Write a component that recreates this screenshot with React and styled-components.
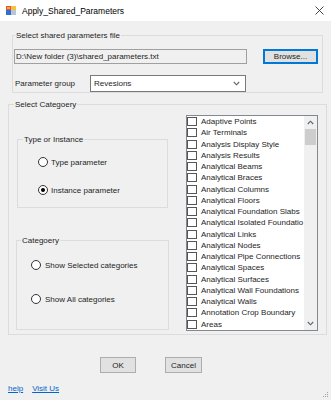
import styled, { createGlobalStyle } from "styled-components";

const GlobalStyle = createGlobalStyle`
  html, body {
    margin: 0;
    padding: 0;
    background: #f0f0f0;
  }
  body {
    font-family: "Liberation Sans", Arial, sans-serif;
    font-size: 8px;
    color: #1e1e1e;
  }
`;

const categories = [
  "Adaptive Points",
  "Air Terminals",
  "Analysis Display Style",
  "Analysis Results",
  "Analytical Beams",
  "Analytical Braces",
  "Analytical Columns",
  "Analytical Floors",
  "Analytical Foundation Slabs",
  "Analytical Isolated Foundatio",
  "Analytical Links",
  "Analytical Nodes",
  "Analytical Pipe Connections",
  "Analytical Spaces",
  "Analytical Surfaces",
  "Analytical Wall Foundations",
  "Analytical Walls",
  "Annotation Crop Boundary",
  "Areas",
];

const Window = styled.div`
  position: relative;
  width: 331px;
  height: 400px;
  display: flex;
  flex-direction: column;
  background: #f0f0f0;
  overflow: hidden;
`;

const TitleBar = styled.div`
  height: 21px;
  flex: none;
  background: #fff;
  display: flex;
  align-items: center;
  padding: 0 7px 0 6px;
  box-sizing: border-box;
`;

const TitleText = styled.span`
  margin-left: 6px;
  font-size: 8.5px;
  color: #000;
`;

const Close = styled.span`
  margin-left: auto;
  display: flex;
`;

const GroupBox = styled.fieldset`
  box-sizing: border-box;
  margin: ${(p) => p.$mt || 0}px 0 0 ${(p) => p.$ml || 0}px;
  padding: ${(p) => p.$pad || "0"};
  width: ${(p) => p.$w}px;
  ${(p) => (p.$h ? `height: ${p.$h}px;` : "")}
  border: 1px solid #dcdcdc;
  min-inline-size: 0;
`;

const Legend = styled.legend`
  padding: 0 1px;
  margin-left: ${(p) => p.$ml}px;
  line-height: 13px;
  font-size: 8px;
`;

const Row = styled.div`
  display: flex;
  align-items: center;
  margin-top: ${(p) => p.$mt || 0}px;
  margin-left: ${(p) => p.$ml || 0}px;
`;

const TextBox = styled.div`
  box-sizing: border-box;
  width: 233px;
  height: 15px;
  border: 1px solid #a0a0a0;
  background: #f0f0f0;
  padding-left: 1px;
  display: flex;
  align-items: center;
  white-space: nowrap;
`;

const Button = styled.div`
  box-sizing: border-box;
  width: ${(p) => p.$w}px;
  height: ${(p) => p.$h || 16}px;
  margin-left: ${(p) => p.$ml || 0}px;
  background: #e1e1e1;
  border: 1px solid ${(p) => (p.$focus ? "#0078d7" : "#adadad")};
  ${(p) => (p.$focus ? "box-shadow: inset 0 0 0 1px #0078d7;" : "")}
  display: flex;
  align-items: center;
  justify-content: center;
`;

const FieldLabel = styled.span`
  width: 75px;
`;

const Combo = styled.div`
  box-sizing: border-box;
  width: 156px;
  height: 17px;
  border: 1px solid #7a7a7a;
  background: #fff;
  display: flex;
  align-items: center;
  padding: 0 5px 0 3px;
  justify-content: space-between;
`;

const Columns = styled.div`
  display: flex;
  align-items: flex-start;
`;

const LeftColumn = styled.div`
  display: flex;
  flex-direction: column;
  align-items: flex-start;
  margin-left: 7px;
`;

const RadioList = styled.div`
  display: flex;
  flex-direction: column;
  gap: ${(p) => p.$gap}px;
  padding: ${(p) => p.$pt}px 0 0 ${(p) => p.$pl}px;
`;

const RadioRow = styled.div`
  display: flex;
  align-items: center;
  height: 12px;
  gap: ${(p) => p.$gap}px;
`;

const RadioCircle = styled.span`
  box-sizing: border-box;
  width: 10px;
  height: 10px;
  border-radius: 50%;
  border: 1px solid #333;
  background: #fff;
  display: flex;
  align-items: center;
  justify-content: center;
  &::after {
    content: "";
    width: 4px;
    height: 4px;
    border-radius: 50%;
    background: ${(p) => (p.$checked ? "#000" : "transparent")};
  }
`;

const ListBox = styled.div`
  box-sizing: border-box;
  width: 132px;
  height: 216px;
  margin: 4px 0 0 17px;
  border: 1px solid #828790;
  background: #fff;
  display: flex;
`;

const Items = styled.div`
  flex: 1;
  overflow: hidden;
`;

const Item = styled.div`
  height: 11.26px;
  display: flex;
  align-items: center;
  white-space: nowrap;
`;

const CheckBox = styled.span`
  box-sizing: border-box;
  flex: none;
  width: 10px;
  height: 9px;
  border: 1px solid #555;
  background: #fff;
  margin-right: 4px;
`;

const ScrollBar = styled.div`
  width: 13px;
  flex: none;
  background: #f0f0f0;
  display: flex;
  flex-direction: column;
`;

const ArrowButton = styled.div`
  height: 13px;
  display: flex;
  align-items: center;
  justify-content: center;
`;

const Thumb = styled.div`
  height: 16px;
  margin: 0 1px;
  background: #cdcdcd;
`;

const Spacer = styled.div`
  flex: 1;
`;

const ButtonRow = styled.div`
  display: flex;
  margin: 22px 0 0 100px;
`;

const Links = styled.div`
  display: flex;
  gap: 9px;
  margin: 11px 0 0 8px;
`;

const Link = styled.a`
  color: #0066cc;
  text-decoration: underline;
  font-size: 8px;
`;

const Grip = styled.svg`
  position: absolute;
  right: 2px;
  bottom: 2px;
`;

function Chevron({ up }) {
  return (
    <svg width="7" height="5" viewBox="0 0 7 5">
      <path
        d={up ? "M0.8 4 L3.5 1.2 L6.2 4" : "M0.8 1 L3.5 3.8 L6.2 1"}
        fill="none"
        stroke="#606060"
        strokeWidth="1.1"
      />
    </svg>
  );
}

function Radio({ label, checked, gap }) {
  return (
    <RadioRow $gap={gap}>
      <RadioCircle $checked={checked} />
      <span>{label}</span>
    </RadioRow>
  );
}

export default function App() {
  return (
    <>
      <GlobalStyle />
      <Window>
        <TitleBar>
          <svg width="10" height="9" viewBox="0 0 10 9">
            <rect x="0" y="0" width="5" height="4" fill="#e8552a" />
            <rect x="5" y="0" width="5" height="4" fill="#f5c343" />
            <rect x="0" y="4" width="5" height="5" fill="#2f6fd0" />
            <rect x="5" y="4" width="5" height="5" fill="#b9c4d6" />
            <rect x="1" y="1" width="3" height="2" fill="#f8a070" />
          </svg>
          <TitleText>Apply_Shared_Parameters</TitleText>
          <Close>
            <svg width="9" height="9" viewBox="0 0 9 9">
              <path d="M0.5 0.5 L8.5 8.5 M8.5 0.5 L0.5 8.5" stroke="#333" strokeWidth="0.9" />
            </svg>
          </Close>
        </TitleBar>

        <GroupBox $mt={8} $ml={12} $w={311} $pad="7px 0 0 0">
          <Legend $ml={2}>Select shared parameters file</Legend>
          <Row $ml={1}>
            <TextBox>{"D:\\New folder (3)\\shared_parameters.txt"}</TextBox>
            <Button $w={55} $h={15} $ml={16} $focus>
              Browse...
            </Button>
          </Row>
          <Row $mt={11} $ml={2}>
            <FieldLabel>Parameter group</FieldLabel>
            <Combo>
              <span>Revesions</span>
              <Chevron />
            </Combo>
          </Row>
        </GroupBox>

        <GroupBox $mt={5} $ml={8} $w={319} $pad="0 0 3px 0">
          <Legend $ml={5}>Select Categoery</Legend>
          <Columns>
            <LeftColumn>
              <GroupBox $mt={22} $ml={1} $w={151} $h={75}>
                <Legend $ml={5}>Type or Instance</Legend>
                <RadioList $pt={10} $pl={20} $gap={16}>
                  <Radio label="Type parameter" gap={3} />
                  <Radio label="Instance parameter" checked gap={3} />
                </RadioList>
              </GroupBox>
              <GroupBox $mt={26} $w={153} $h={96}>
                <Legend $ml={4}>Categoery</Legend>
                <RadioList $pt={12} $pl={14} $gap={22}>
                  <Radio label="Show Selected categories" gap={4} />
                  <Radio label="Show All categories" gap={4} />
                </RadioList>
              </GroupBox>
            </LeftColumn>
            <ListBox>
              <Items>
                {categories.map((c) => (
                  <Item key={c}>
                    <CheckBox />
                    {c}
                  </Item>
                ))}
              </Items>
              <ScrollBar>
                <ArrowButton>
                  <Chevron up />
                </ArrowButton>
                <Thumb />
                <Spacer />
                <ArrowButton>
                  <Chevron />
                </ArrowButton>
              </ScrollBar>
            </ListBox>
          </Columns>
        </GroupBox>

        <ButtonRow>
          <Button $w={36}>OK</Button>
          <Button $w={37} $ml={29}>
            Cancel
          </Button>
        </ButtonRow>

        <Links>
          <Link href="#">help</Link>
          <Link href="#">Visit Us</Link>
        </Links>

        <Grip width="7" height="7" viewBox="0 0 7 7">
          <rect x="5" y="1" width="1" height="1" fill="#a0a0a0" />
          <rect x="3" y="3" width="1" height="1" fill="#a0a0a0" />
          <rect x="5" y="3" width="1" height="1" fill="#a0a0a0" />
          <rect x="1" y="5" width="1" height="1" fill="#a0a0a0" />
          <rect x="3" y="5" width="1" height="1" fill="#a0a0a0" />
          <rect x="5" y="5" width="1" height="1" fill="#a0a0a0" />
        </Grip>
      </Window>
    </>
  );
}
